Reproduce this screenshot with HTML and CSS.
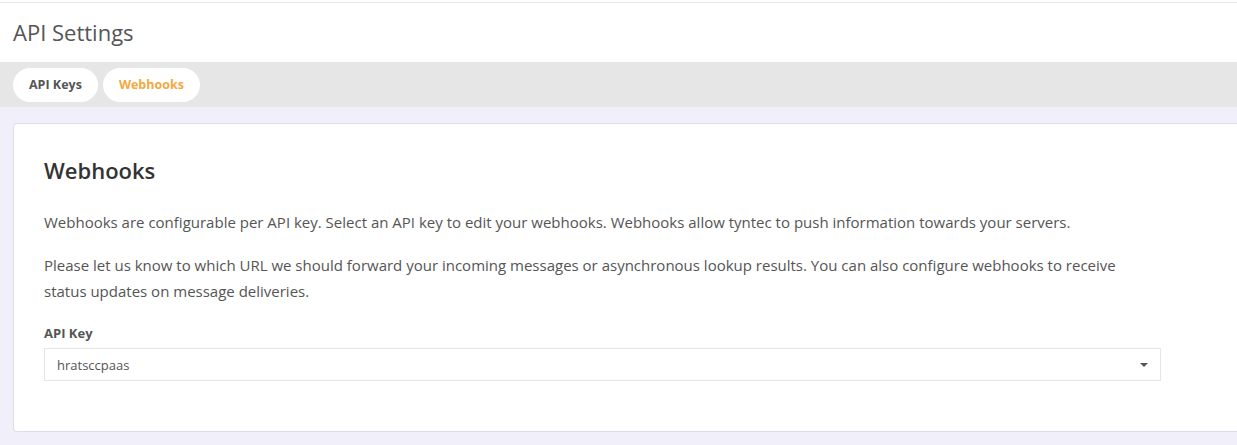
FILE: index.html
```html
<!doctype html>
<html>
<head>
<title>API Settings</title>
<link rel="stylesheet" href="styles.css">
</head>
<body>
<div class="page">
	<header class="page-head">
		<h1>API Settings</h1>
	</header>
	<nav class="tabs">
		<a class="tab" href="#">API Keys</a>
		<a class="tab active" href="#">Webhooks</a>
	</nav>
	<main class="content">
		<section class="card">
			<h2>Webhooks</h2>
			<p>Webhooks are configurable per API key. Select an API key to edit your webhooks. Webhooks allow tyntec to push information towards your servers.</p>
			<p>Please let us know to which URL we should forward your incoming messages or asynchronous lookup results. You can also configure webhooks to receive status updates on message deliveries.</p>
			<label class="field-label" for="apikey">API Key</label>
			<div class="select">
				<span id="apikey">hratsccpaas</span>
				<span class="caret"></span>
			</div>
		</section>
	</main>
</div>
</body>
</html>
```

FILE: styles.css
```css
body {
  margin: 0;
  font-family: "Open Sans", "Liberation Sans", sans-serif;
  color: #555;
  background: #fff;
}
.page {
  border-top: 1px solid #e8e8e8;
  margin-top: 2px;
}
.page-head {
  height: 59px;
  padding-left: 13px;
  display: flex;
  align-items: center;
}
.page-head h1 {
  margin: 0;
  font-size: 22px;
  font-weight: 400;
  color: #555;
  position: relative;
  top: -1px;
}
.tabs {
  background: #e6e6e6;
  height: 45px;
  padding: 0 13px;
  display: flex;
  align-items: center;
  gap: 5px;
}
.tab {
  display: block;
  background: #fff;
  border-radius: 17px;
  height: 34px;
  line-height: 34px;
  padding: 0 16px;
  font-size: 12.5px;
  font-weight: 700;
  color: #555;
  text-decoration: none;
}
.tab.active {
  color: #f5a83d;
}
.content {
  background: #f1f0fa;
  padding: 16px 0 13px 13px;
}
.card {
  background: #fff;
  border: 1px solid #dedcef;
  border-right: 0;
  border-radius: 4px 0 0 4px;
  padding: 31px 76px 50px 30px;
}
.card h2 {
  margin: 0 0 24px;
  font-size: 22px;
  font-weight: 600;
  color: #333;
  line-height: 30px;
}
.card p {
  margin: 0 0 17px;
  font-size: 15px;
  line-height: 26px;
}
.field-label {
  display: block;
  margin-top: 20px;
  font-size: 13px;
  font-weight: 700;
  color: #555;
  line-height: 18px;
}
.select {
  margin-top: 6px;
  height: 31px;
  border: 1px solid #e6e6e6;
  display: flex;
  align-items: center;
  justify-content: space-between;
  padding: 0 12px;
  font-size: 13px;
  color: #555;
}
.caret {
  width: 0;
  height: 0;
  border-left: 4px solid transparent;
  border-right: 4px solid transparent;
  border-top: 4px solid #555;
}
```
